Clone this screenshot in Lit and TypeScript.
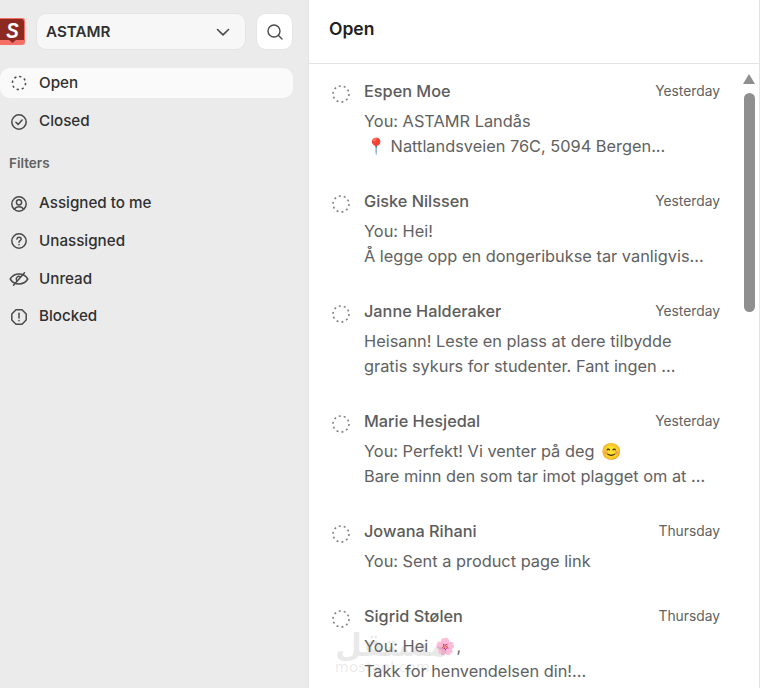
import { LitElement, html, css, svg } from "lit";
import { customElement } from "lit/decorators.js";

const I = (body: unknown, size = 20) => html`<svg class="ic" width=${size} height=${size} viewBox="0 0 20 20" fill="none" stroke="currentColor" stroke-width="1.5" stroke-linecap="round" stroke-linejoin="round">${body}</svg>`;

const icons = {
  open: svg`<circle cx="10" cy="10" r="6.600" stroke-dasharray="2.300 2.880" stroke-linecap="butt"/>`,
  closed: svg`<circle cx="10" cy="10" r="7.200"/><path d="M6.900 10.200l2.200 2.200 4-4.300"/>`,
  me: svg`<circle cx="10" cy="10" r="7.200"/><circle cx="10" cy="8.300" r="2.600"/><path d="M5.400 15.300c1-1.900 2.600-2.600 4.600-2.600s3.600.7 4.600 2.600"/>`,
  un: svg`<circle cx="10" cy="10" r="7.200"/><path d="M7.900 8.100c.2-1.200 1.100-1.800 2.200-1.800 1.200 0 2.100.8 2.100 1.800 0 1.500-2.200 1.600-2.200 3.100"/><path d="M10 13.600v.1"/>`,
  unread: svg`<path d="M1.200 10c2-3.300 5-5 8.800-5s6.800 1.700 8.800 5c-2 3.300-5 5-8.800 5s-6.800-1.700-8.800-5z"/><path d="M7.600 11.300A2.700 2.700 0 0 1 11.500 7.800"/><path d="M15.500 3.800L4.500 16.200"/>`,
  blocked: svg`<path d="M7 2.800h6l4.200 4.200v6L13 17.200H7L2.800 13V7z"/><path d="M10 6.300v4.600"/><path d="M10 13.600v.1"/>`,
};

const spinner = svg`<circle cx="10" cy="10" r="8" stroke-width="1.600" stroke-dasharray="2 3.030" stroke-linecap="butt"/>`;

const em = (s: string, extra = "") => html`<span class="em ${extra}">${s}</span>`;

const convos = [
  { name: "Espen Moe", when: "Yesterday", lines: [html`You: ASTAMR Landås`, html`${em("📍")} Nattlandsveien 76C, 5094 Bergen...`] },
  { name: "Giske Nilssen", when: "Yesterday", lines: [html`You: Hei!`, html`Å legge opp en dongeribukse tar vanligvis...`] },
  { name: "Janne Halderaker", when: "Yesterday", lines: [html`Heisann! Leste en plass at dere tilbydde`, html`gratis sykurs for studenter. Fant ingen ...`] },
  { name: "Marie Hesjedal", when: "Yesterday", lines: [html`You: Perfekt! Vi venter på deg ${em("😊")}`, html`Bare minn den som tar imot plagget om at ...`] },
  { name: "Jowana Rihani", when: "Thursday", lines: [html`You: Sent a product page link`] },
  { name: "Sigrid Stølen", when: "Thursday", lines: [html`You: Hei ${em("🌸", "fl")} ,`, html`Takk for henvendelsen din!...`] },
];

@customElement("app-root")
export class AppRoot extends LitElement {
  static styles = css`
    :host { display: block; width: 765px; height: 688px; overflow: hidden; background: #fff;
      font-family: Inter, "Noto Sans", sans-serif; color: #303030; }
    .page { display: grid; grid-template-columns: 309px 451px 5px; height: 688px; }
    .side { background: #ebebeb; display: flex; flex-direction: column; border-right: 1px solid #e3e3e3; box-sizing: border-box; }
    .top { display: flex; align-items: center; padding-top: 13px; height: 37px; }
    .logo { width: 25px; height: 28px; flex: none; margin-right: 11px; }
    .select { width: 210px; height: 37px; box-sizing: border-box; border-radius: 10px; background: #f7f7f7; border: 1px solid #e4e4e4;
      display: flex; align-items: center; justify-content: space-between; padding: 0 14px 0 9px;
      font-size: 15.200px; font-weight: 600; color: #303030; }
    .search { width: 37px; height: 37px; box-sizing: border-box; margin-left: 10px; border-radius: 10px; background: #fff; border: 1px solid #e6e6e6;
      display: flex; align-items: center; justify-content: center; color: #4a4a4a; }
    .nav { display: flex; flex-direction: column; padding-top: 18px; }
    .item { width: 293px; height: 30px; margin-bottom: 7.750px; border-radius: 10px; display: flex; align-items: center; gap: 10px; padding-left: 9px; box-sizing: border-box;
      font-size: 15.200px; font-weight: 500; color: #303030; line-height: 30px; }
    .item span { position: relative; top: -0.500px; }
    .item .ic { color: #4a4a4a; flex: none; }
    .item.on { background: #fafafa; margin-bottom: 8.500px; }
    .label { font-size: 13.500px; font-weight: 600; color: #616161; padding-left: 9px; height: 18px; line-height: 18px; margin: 9.250px 0 17px; }
    .main { display: flex; flex-direction: column; min-width: 0; position: relative; border-right: 1px solid #e3e3e3; }
    .head { flex: none; display: flex; align-items: center; padding-left: 20px; border-bottom: 1px solid #e3e3e3;
      font-size: 17.500px; font-weight: 600; color: #202020; padding-bottom: 6px; height: 57px; }
    .list { flex: 1; overflow: hidden; position: relative; padding-top: 16px; }
    .row { display: flex; padding-left: 22px; margin-bottom: 31px; }
    .row .ic { flex: none; color: #808080; margin: 4px 13px 0 0; }
    .body { width: 356px; }
    .line1 { display: flex; justify-content: space-between; align-items: center; height: 22px; }
    .name { font-size: 16.300px; font-weight: 500; color: #5c5c5c; }
    .when { font-size: 13.800px; color: #616161; position: relative; top: -0.500px; }
    .msg { font-size: 16.350px; line-height: 25px; color: #616161; white-space: nowrap; }
    .em { margin-left: 2px; }
    .em.fl { margin-right: -3px; }
    .msgs { margin-top: 7px; }
    .scroll { position: absolute; left: 434px; top: 64px; bottom: 0; width: 13px; }
    .arrow { position: absolute; left: 0; top: 10px; width: 0; height: 0; border-left: 6.500px solid transparent; border-right: 6.500px solid transparent; border-bottom: 10px solid #8f8f8f; }
    .thumb { position: absolute; left: 1px; top: 29px; width: 11px; height: 219px; background: #8f8f8f; border-radius: 6px; }
    .mark { position: absolute; left: 26px; top: 630px; width: 94px; color: rgba(120,120,120,.17); line-height: 1; pointer-events: none; text-align: center; }
    .mark .ar { font-size: 31px; font-weight: 700; font-family: "DejaVu Sans", sans-serif; display: block; }
    .mark .en { font-family: "Noto Sans", sans-serif; font-size: 14.500px; display: block; margin-top: -2px; letter-spacing: .6px; }
  `;

  render() {
    return html`<div class="page">
      <aside class="side">
        <div class="top">
          <svg class="logo" viewBox="0 0 25 28">
            <path d="M0 0h22a3 3 0 0 1 3 3v21a3 3 0 0 1-3 3H0z" fill="#f56f66"/>
            <path d="M0 1h21a3 3 0 0 1 3 3v18H0z" fill="#8c2a22"/>
            <path d="M9 22h7l-3.500 3z" fill="#8c2a22"/>
            <text transform="translate(12.500 20) scale(.85 1)" text-anchor="middle" font-family="Liberation Sans, sans-serif" font-size="22" font-weight="700" font-style="italic" fill="#fff">S</text>
          </svg>
          <div class="select"><span>ASTAMR</span>
            <svg width="16" height="16" viewBox="0 0 16 16" fill="none" stroke="#4a4a4a" stroke-width="1.600" stroke-linecap="round" stroke-linejoin="round"><path d="M2.500 5.500L8 10.800l5.500-5.300"/></svg>
          </div>
          <div class="search">
            <svg width="18" height="18" viewBox="0 0 18 18" fill="none" stroke="currentColor" stroke-width="1.400" stroke-linecap="round"><circle cx="8" cy="8" r="6"/><path d="M12.500 12.500L16 16"/></svg>
          </div>
        </div>
        <nav class="nav">
          <div class="item on">${I(icons.open)}<span>Open</span></div>
          <div class="item">${I(icons.closed)}<span>Closed</span></div>
          <div class="label">Filters</div>
          <div class="item">${I(icons.me)}<span>Assigned to me</span></div>
          <div class="item">${I(icons.un)}<span>Unassigned</span></div>
          <div class="item">${I(icons.unread)}<span>Unread</span></div>
          <div class="item">${I(icons.blocked)}<span>Blocked</span></div>
        </nav>
      </aside>
      <main class="main">
        <header class="head">Open</header>
        <section class="list">
          ${convos.map((c) => html`<div class="row">
            ${I(spinner)}
            <div class="body">
              <div class="line1"><span class="name">${c.name}</span><span class="when">${c.when}</span></div>
              <div class="msgs">${c.lines.map((l) => html`<div class="msg">${l}</div>`)}</div>
            </div>
          </div>`)}
        </section>
        <div class="scroll"><div class="arrow"></div><div class="thumb"></div></div>
        <div class="mark"><span class="ar">مستقل</span><span class="en">mostaql.com</span></div>
      </main>
      <div></div>
    </div>`;
  }
}
